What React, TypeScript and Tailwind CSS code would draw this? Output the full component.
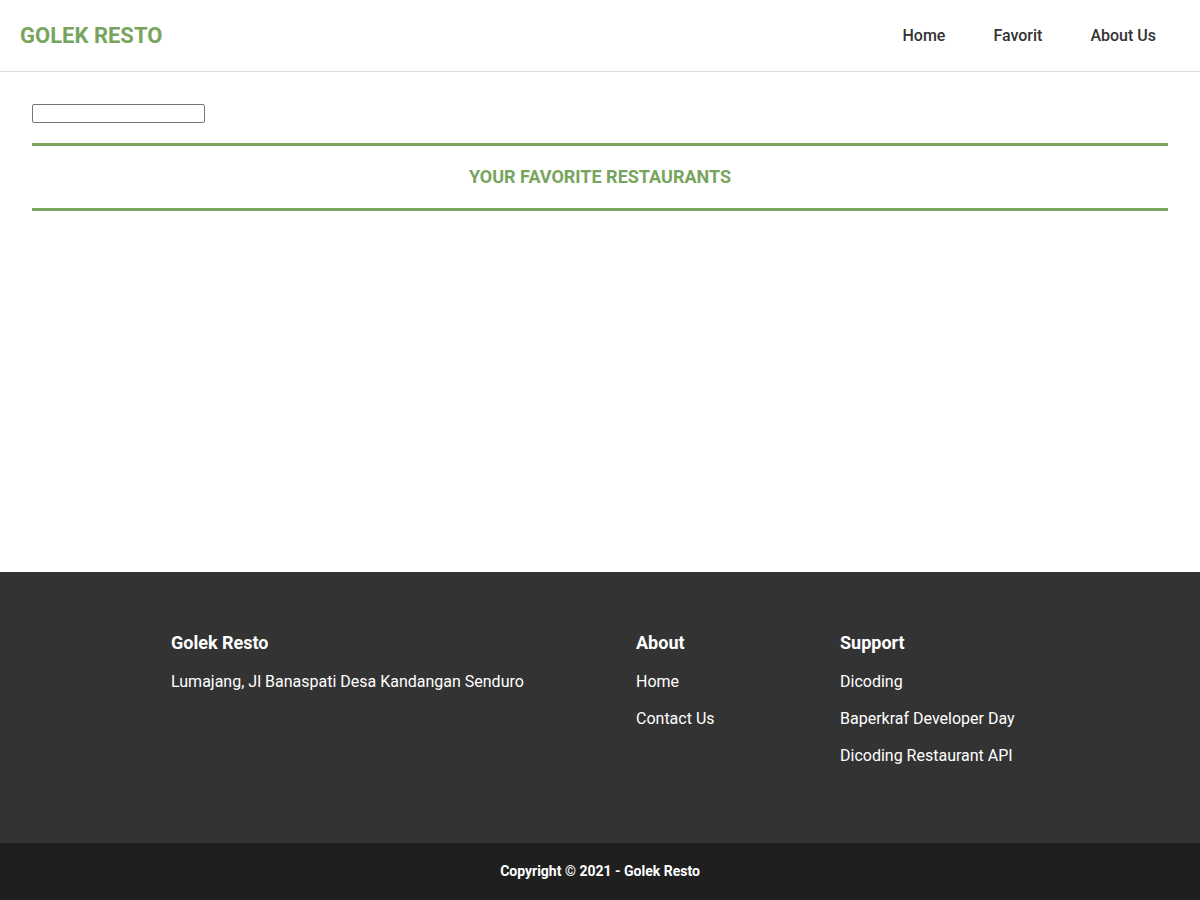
export default function App() {
  return (
    <div className="min-h-screen flex flex-col bg-white font-['Roboto','Liberation_Sans',sans-serif]">
      <header className="h-[72px] flex items-center justify-between px-5 border-b border-[#dddddd]">
        <h1 className="text-[22px] font-bold text-[#78a55e]">GOLEK RESTO</h1>
        <nav className="flex items-center pr-[24px] gap-[48px]">
          <a className="text-[16px] font-medium text-[#333333]">Home</a>
          <a className="text-[16px] font-medium text-[#333333]">Favorit</a>
          <a className="text-[16px] font-medium text-[#333333]">About Us</a>
        </nav>
      </header>

      <main className="h-[500px] px-8 pt-8">
        <input
          type="text"
          className="block w-[173px] h-[19px] border border-[#767676] rounded-[2px]"
        />
        <div className="mt-5 border-y-[3px] border-[#78a55e] h-[68px] flex items-center justify-center pb-[2px]">
          <h2 className="text-[18px] font-bold text-[#78a55e]">YOUR FAVORITE RESTAURANTS</h2>
        </div>
      </main>

      <footer className="bg-[#333333] text-white h-[271px] pt-[59px]">
        <div className="flex pl-[171px]">
          <div className="w-[465px]">
            <h3 className="text-[18px] font-bold leading-[24px]">Golek Resto</h3>
            <p className="mt-[16px] text-[16px] leading-[22px]">Lumajang, Jl Banaspati Desa Kandangan Senduro</p>
          </div>
          <div className="w-[204px]">
            <h3 className="text-[18px] font-bold leading-[24px]">About</h3>
            <ul className="mt-[16px] flex flex-col gap-[15px] text-[16px] leading-[22px]">
              <li>Home</li>
              <li>Contact Us</li>
            </ul>
          </div>
          <div>
            <h3 className="text-[18px] font-bold leading-[24px]">Support</h3>
            <ul className="mt-[16px] flex flex-col gap-[15px] text-[16px] leading-[22px]">
              <li>Dicoding</li>
              <li>Baperkraf Developer Day</li>
              <li>Dicoding Restaurant API</li>
            </ul>
          </div>
        </div>
      </footer>
      <div className="bg-[#1f1f1f] h-[57px] flex items-center justify-center">
        <p className="text-[14px] font-bold text-white">Copyright © 2021 - Golek Resto</p>
      </div>
    </div>
  );
}
